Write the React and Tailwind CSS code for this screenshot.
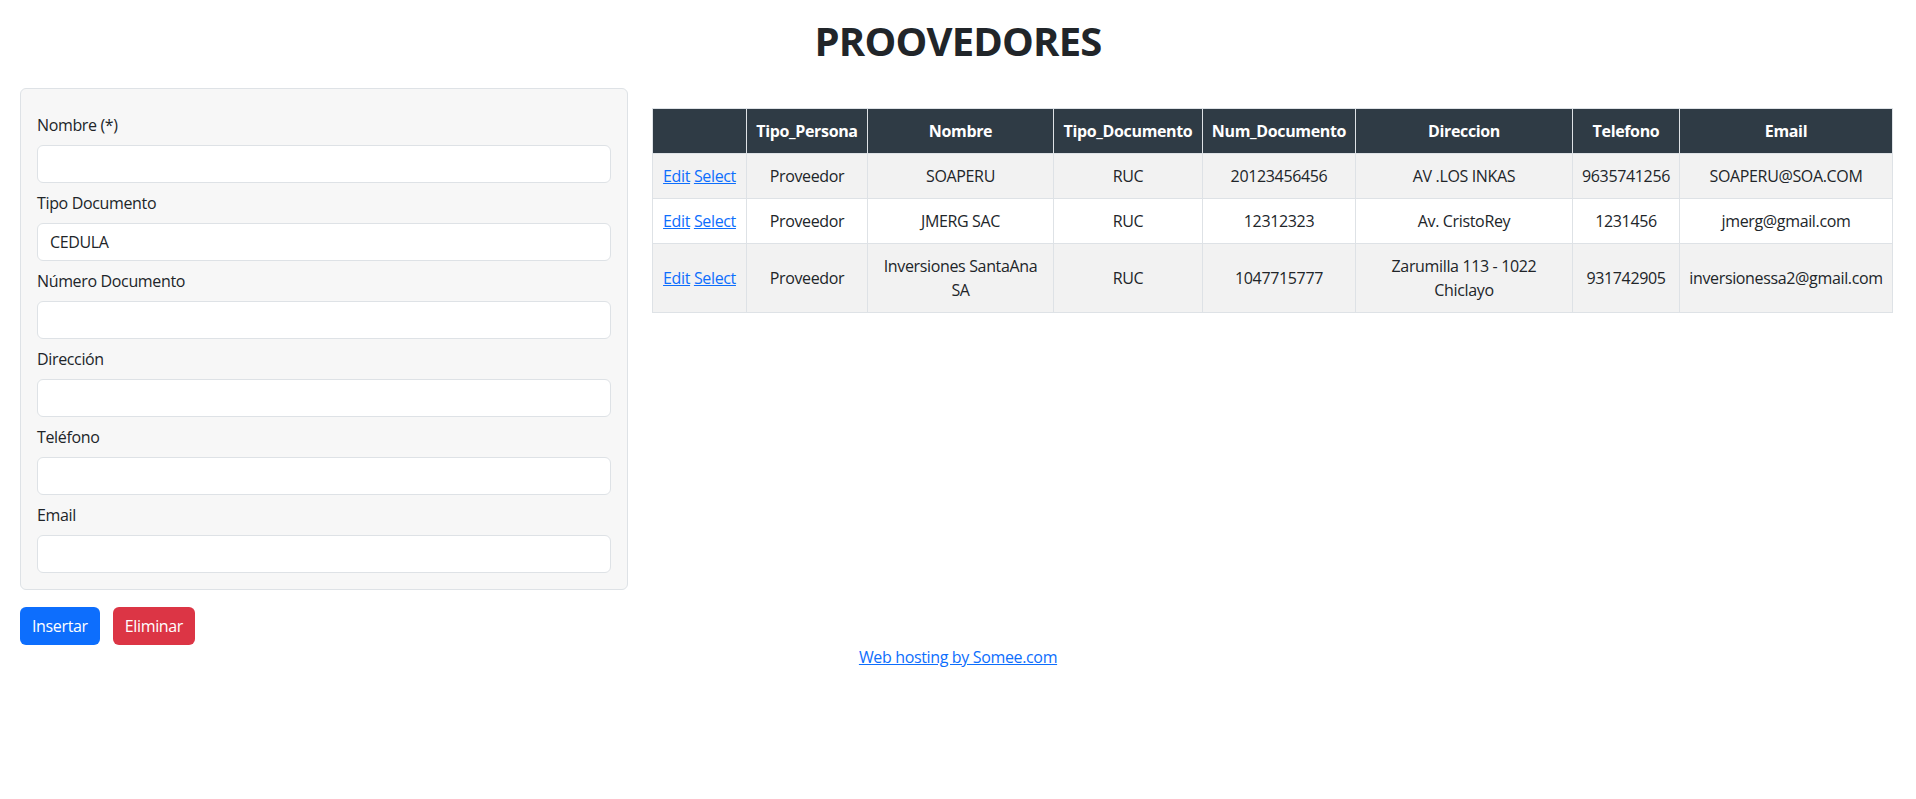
import React from 'react';

const fields = [
    { label: 'Nombre (*)', value: '' },
    { label: 'Tipo Documento', value: 'CEDULA' },
    { label: 'Número Documento', value: '' },
    { label: 'Dirección', value: '' },
    { label: 'Teléfono', value: '' },
    { label: 'Email', value: '' },
];

const cols = [
    { title: '', w: 'w-[94px]' },
    { title: 'Tipo_Persona', w: 'w-[121px]' },
    { title: 'Nombre', w: 'w-[186px]' },
    { title: 'Tipo_Documento', w: 'w-[149px]' },
    { title: 'Num_Documento', w: 'w-[153px]' },
    { title: 'Direccion', w: 'w-[217px]' },
    { title: 'Telefono', w: 'w-[107px]' },
    { title: 'Email', w: 'w-[213px]' },
];

const rows = [
    { tipo: 'Proveedor', nombre: 'SOAPERU', doc: 'RUC', num: '20123456456', dir: 'AV .LOS INKAS', tel: '9635741256', email: 'SOAPERU@SOA.COM' },
    { tipo: 'Proveedor', nombre: 'JMERG SAC', doc: 'RUC', num: '12312323', dir: 'Av. CristoRey', tel: '1231456', email: 'jmerg@gmail.com' },
    { tipo: 'Proveedor', nombre: 'Inversiones SantaAna SA', doc: 'RUC', num: '1047715777', dir: 'Zarumilla 113 - 1022 Chiclayo', tel: '931742905', email: 'inversionessa2@gmail.com' },
];

export default function App() {
    return (
        <div className="min-h-screen bg-white text-[#212529] text-[16px] leading-[24px] tracking-[-0.35px] font-['Open_Sans',sans-serif]">
            <h1 className="pt-[17px] mb-[23px] text-center text-[40px] leading-[48px] font-bold tracking-[-0.8px]">PROOVEDORES</h1>

            <div className="grid grid-cols-[608px_1240px] gap-x-[24px] pl-[20px]">
                <div>
                    <div className="rounded-[6px] border border-[#dee2e6] bg-[#f7f7f7] px-[16px] pt-[24px] pb-[8px]">
                        {fields.map((f) => (
                            <div key={f.label} className="mb-[8px]">
                                <label className="block mb-[8px]">{f.label}</label>
                                <input
                                    type="text"
                                    defaultValue={f.value}
                                    className="block w-full h-[38px] rounded-[6px] border border-[#dee2e6] bg-white px-[12px] text-[#212529] outline-none"
                                />
                            </div>
                        ))}
                    </div>
                    <div className="flex gap-[13px] mt-[17px]">
                        <button className="h-[38px] px-[12px] rounded-[6px] bg-[#0d6efd] text-white">Insertar</button>
                        <button className="h-[38px] px-[12px] rounded-[6px] bg-[#dc3545] text-white">Eliminar</button>
                    </div>
                </div>

                <div className="mt-[20px]">
                    <table className="w-full table-fixed border-collapse border border-[#dee2e6] text-center">
                        <thead>
                            <tr className="bg-[#2f3b45] text-white">
                                {cols.map((c) => (
                                    <th key={c.title} className={`${c.w} border border-[#dee2e6] px-[6px] py-[10px] font-bold whitespace-nowrap`}>{c.title}</th>
                                ))}
                            </tr>
                        </thead>
                        <tbody>
                            {rows.map((r, i) => (
                                <tr key={r.nombre} className={i % 2 === 0 ? 'bg-[#f2f2f2]' : 'bg-white'}>
                                    <td className="border border-[#dee2e6] px-[6px] py-[10px] whitespace-nowrap">
                                        <a href="#" className="text-[#0d6efd] underline">Edit</a>{' '}
                                        <a href="#" className="text-[#0d6efd] underline">Select</a>
                                    </td>
                                    <td className="border border-[#dee2e6] px-[8px] py-[10px]">{r.tipo}</td>
                                    <td className="border border-[#dee2e6] px-[8px] py-[10px]">{r.nombre}</td>
                                    <td className="border border-[#dee2e6] px-[8px] py-[10px]">{r.doc}</td>
                                    <td className="border border-[#dee2e6] px-[8px] py-[10px]">{r.num}</td>
                                    <td className="border border-[#dee2e6] px-[8px] py-[10px]">{r.dir}</td>
                                    <td className="border border-[#dee2e6] px-[8px] py-[10px]">{r.tel}</td>
                                    <td className="border border-[#dee2e6] px-[6px] py-[10px] whitespace-nowrap">{r.email}</td>
                                </tr>
                            ))}
                        </tbody>
                    </table>
                </div>
            </div>

            <div className="text-center">
                <a href="#" className="text-[#0d6efd] underline">Web hosting by Somee.com</a>
            </div>
        </div>
    );
}
